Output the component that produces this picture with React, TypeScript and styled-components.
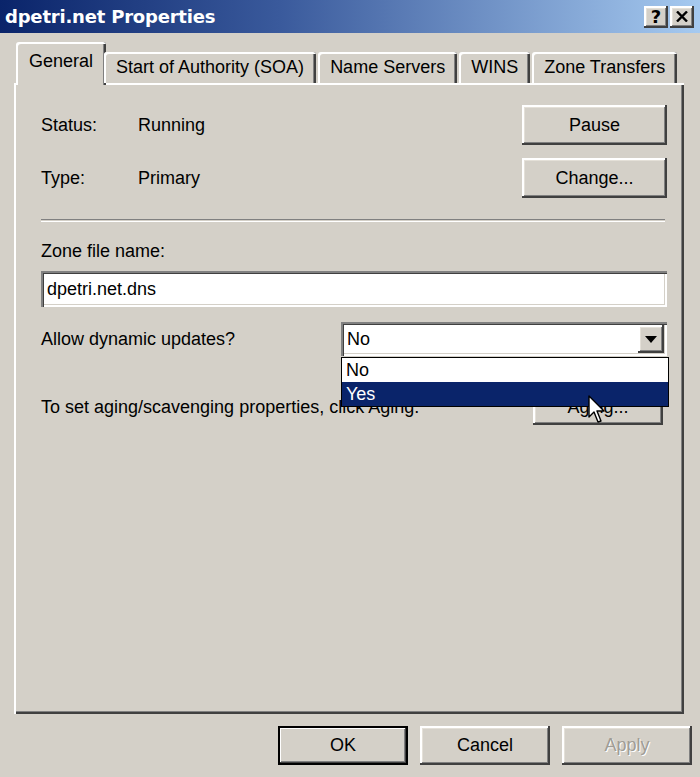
import React from 'react';
import styled, { createGlobalStyle, css } from 'styled-components';

const GlobalStyle = createGlobalStyle`
    html, body {
        margin: 0;
        padding: 0;
        background: #d4d0c8;
    }
    body {
        font-family: 'Liberation Sans', Arial, sans-serif;
        font-size: 18px;
        color: #000;
    }
`;

const raised = css`
    box-shadow: inset -2px -2px #404040, inset 2px 2px #fff, inset -3px -3px #808080, inset 3px 3px #e4e0d8;
`;

const sunken = css`
    box-shadow: inset 2px 2px #808080, inset 3px 3px #404040, inset -2px -2px #fff, inset -3px -3px #d4d0c8;
`;

const Dialog = styled.div`
    width: 700px;
    height: 777px;
    background: #d4d0c8;
    display: flex;
    flex-direction: column;
    overflow: hidden;
`;

const TitleBar = styled.div`
    height: 33px;
    flex: none;
    display: flex;
    align-items: center;
    padding: 0 6px 0 5px;
    background: linear-gradient(to right, #0a246a 0%, #3a5a9c 40%, #a6caf0 100%);
    color: #fff;
    font-family: 'DejaVu Sans', Verdana, sans-serif;
    font-weight: bold;
    font-size: 18px;

    .title {
        flex: 1;
        letter-spacing: -0.2px;
    }
`;

const TitleButton = styled.div`
    width: 24px;
    height: 22px;
    margin-left: 2px;
    background: #d4d0c8;
    ${raised};
    display: flex;
    align-items: center;
    justify-content: center;
    color: #000;
    font-size: 18px;
    font-weight: bold;
`;

const Body = styled.div`
    flex: 1;
    display: flex;
    flex-direction: column;
    padding: 14px 16px 0 14px;
`;

const TabRow = styled.div`
    display: flex;
    align-items: flex-end;
    padding-left: 4px;
    height: 36px;
    position: relative;
    z-index: 2;
`;

const Tab = styled.div<{ $active?: boolean }>`
    height: ${p => (p.$active ? 38 : 31)}px;
    margin: ${p => (p.$active ? '0 -2px -2px -2px' : '0 2px 0 0')};
    padding: 0 ${p => (p.$active ? 13 : 12)}px;
    display: flex;
    align-items: center;
    background: #d4d0c8;
    border-radius: 3px 3px 0 0;
    box-shadow: inset 2px 2px #fff, inset -2px 0 #404040, inset -3px 0 #808080;
    padding-bottom: ${p => (p.$active ? 5 : 0)}px;
    white-space: nowrap;
`;

const Panel = styled.div`
    position: relative;
    height: 631px;
    flex: none;
    box-shadow: inset 2px 2px #fff, inset -2px -2px #404040, inset -3px -3px #808080;
    padding: 22px 17px 0 27px;
    box-sizing: border-box;
`;

const InfoRow = styled.div<{ $gap?: number }>`
    display: flex;
    align-items: center;
    height: 40px;
    margin-top: ${p => p.$gap ?? 0}px;

    .label {
        width: 97px;
    }
`;

const Button = styled.div<{ $width?: number; $height?: number; $default?: boolean; $disabled?: boolean }>`
    width: ${p => p.$width ?? 130}px;
    height: ${p => p.$height ?? 39}px;
    box-sizing: border-box;
    margin-left: auto;
    display: flex;
    align-items: center;
    justify-content: center;
    background: #d4d0c8;
    ${raised};
    color: ${p => (p.$disabled ? '#a09c94' : '#000')};
    text-shadow: ${p => (p.$disabled ? '1px 1px #fff' : 'none')};

    ${p =>
        p.$default &&
        css`
            box-shadow: inset 0 0 0 2px #000, inset -3px -3px #404040, inset 3px 3px #fff, inset -4px -4px #808080;
        `}
`;

const Separator = styled.div`
    height: 1px;
    margin: 21px 2px 0 0;
    border-top: 1px solid #808080;
    border-bottom: 1px solid #fff;
`;

const FieldLabel = styled.div`
    margin-top: 17px;
    height: 24px;
    line-height: 24px;
`;

const TextInput = styled.div`
    margin-top: 8px;
    height: 36px;
    background: #fff;
    ${sunken};
    display: flex;
    align-items: center;
    padding-left: 6px;
`;

const SelectRow = styled.div`
    display: flex;
    align-items: center;
    height: 34px;
    margin-top: 15px;

    .label {
        width: 300px;
    }
`;

const SelectBox = styled.div`
    position: relative;
    flex: 1;
    height: 34px;
    background: #fff;
    ${sunken};
    display: flex;
    align-items: center;
    padding-left: 6px;

    .value {
        flex: 1;
    }
`;

const ArrowButton = styled.div`
    width: 26px;
    height: 28px;
    margin-right: 3px;
    background: #d4d0c8;
    ${raised};
    display: flex;
    align-items: center;
    justify-content: center;
`;

const DropList = styled.div`
    position: absolute;
    left: 0;
    right: -2px;
    top: 35px;
    border: 1px solid #000;
    background: #fff;
    z-index: 5;
`;

const DropItem = styled.div<{ $selected?: boolean }>`
    height: 24px;
    line-height: 24px;
    padding-left: 4px;
    background: ${p => (p.$selected ? '#0a246a' : '#fff')};
    color: ${p => (p.$selected ? '#fff' : '#000')};
`;

const AgingRow = styled.div`
    display: flex;
    align-items: center;
    margin-top: 34px;
    padding-right: 4px;
`;

const Cursor = styled.svg`
    position: absolute;
    left: 574px;
    top: 312px;
    z-index: 6;
`;

const Footer = styled.div`
    display: flex;
    justify-content: flex-end;
    gap: 12px;
    margin-top: 12px;
    margin-right: -8px;

    ${Button} {
        margin-left: 0;
    }
`;

const App: React.FC = () => {
    return (
        <>
            <GlobalStyle />
            <Dialog>
                <TitleBar>
                    <span className="title">dpetri.net Properties</span>
                    <TitleButton>?</TitleButton>
                    <TitleButton>
                        <svg width="12" height="11" viewBox="0 0 12 11">
                            <path d="M1 0.5 L11 10.5 M11 0.5 L1 10.5" stroke="#000" strokeWidth="2.4" />
                        </svg>
                    </TitleButton>
                </TitleBar>
                <Body>
                    <TabRow>
                        <Tab $active>General</Tab>
                        <Tab>Start of Authority (SOA)</Tab>
                        <Tab>Name Servers</Tab>
                        <Tab>WINS</Tab>
                        <Tab>Zone Transfers</Tab>
                    </TabRow>
                    <Panel>
                        <InfoRow>
                            <span className="label">Status:</span>
                            <span>Running</span>
                            <Button $width={145} $height={40}>Pause</Button>
                        </InfoRow>
                        <InfoRow $gap={13}>
                            <span className="label">Type:</span>
                            <span>Primary</span>
                            <Button $width={145} $height={40}>Change...</Button>
                        </InfoRow>
                        <Separator />
                        <FieldLabel>Zone file name:</FieldLabel>
                        <TextInput>dpetri.net.dns</TextInput>
                        <SelectRow>
                            <span className="label">Allow dynamic updates?</span>
                            <SelectBox>
                                <span className="value">No</span>
                                <ArrowButton>
                                    <svg width="12" height="7" viewBox="0 0 12 7">
                                        <path d="M0 0 H12 L6 7 Z" fill="#000" />
                                    </svg>
                                </ArrowButton>
                                <DropList>
                                    <DropItem>No</DropItem>
                                    <DropItem $selected>Yes</DropItem>
                                </DropList>
                            </SelectBox>
                        </SelectRow>
                        <AgingRow>
                            <span>To set aging/scavenging properties, click Aging.</span>
                            <Button $width={130} $height={35}>Aging...</Button>
                        </AgingRow>
                        <Cursor width="20" height="30" viewBox="0 0 20 30">
                            <path
                                d="M1 1 L1 22 L6 17 L10 27 L13 26 L9 16 L16 16 Z"
                                fill="#fff"
                                stroke="#000"
                                strokeWidth="1.4"
                                strokeLinejoin="round"
                            />
                        </Cursor>
                    </Panel>
                    <Footer>
                        <Button $default>OK</Button>
                        <Button>Cancel</Button>
                        <Button $disabled>Apply</Button>
                    </Footer>
                </Body>
            </Dialog>
        </>
    );
};

export default App;
